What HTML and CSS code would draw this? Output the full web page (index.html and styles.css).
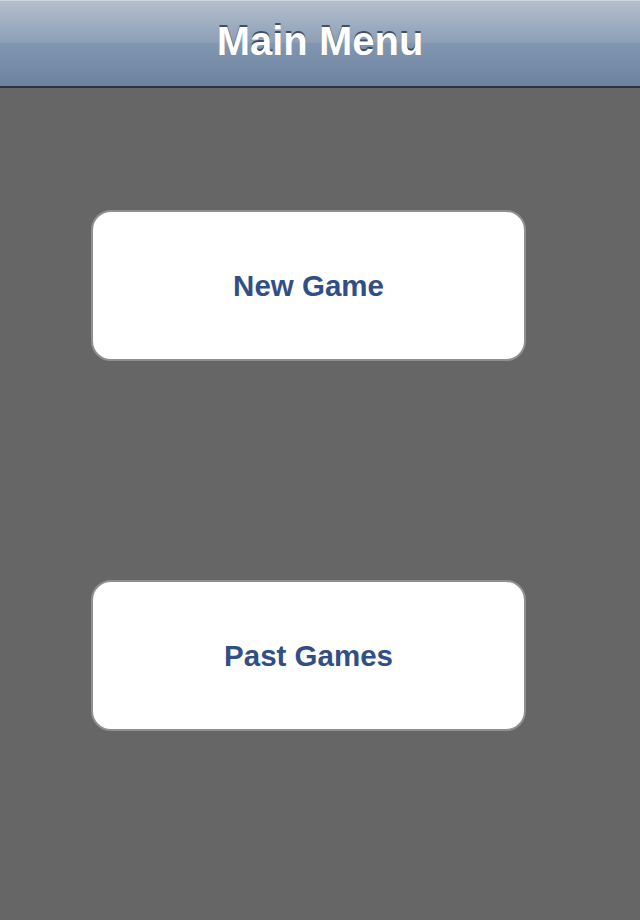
FILE: index.html
```html
<!DOCTYPE html>
<html>
<head>
<meta charset="utf-8">
<link rel="stylesheet" href="styles.css">
</head>
<body>
<header class="navbar"><h1 class="title">Main Menu</h1></header>
<main class="menu">
  <button class="menu-btn">New Game</button>
  <button class="menu-btn">Past Games</button>
</main>
</body>
</html>
```
FILE: styles.css
```css
html, body {
  margin: 0;
  padding: 0;
  background: #666666;
  font-family: "Liberation Sans", Arial, sans-serif;
}
.navbar {
  height: 85px;
  border-top: 1px solid #cfd6de;
  border-bottom: 2px solid #2b333d;
  box-sizing: content-box;
  background: linear-gradient(to bottom, #b3bfcd 0%, #8c9eb5 50%, #8196b0 50%, #6c82a0 100%);
  display: flex;
  align-items: center;
  justify-content: center;
}
.title {
  margin: 0 0 6px 0;
  color: #ffffff;
  font-size: 40px;
  font-weight: bold;
  line-height: 1;
  text-shadow: 0 -2px 0 rgba(40, 50, 65, 0.75);
}
.menu {
  display: flex;
  flex-direction: column;
  align-items: flex-start;
  padding: 122px 0 0 91px;
  gap: 219px;
}
.menu-btn {
  box-sizing: border-box;
  width: 435px;
  height: 151px;
  background: #ffffff;
  border: 2px solid #8f8f8f;
  border-radius: 20px;
  color: #324f85;
  font-family: "Liberation Sans", Arial, sans-serif;
  font-size: 29.5px;
  font-weight: bold;
  display: flex;
  align-items: center;
  justify-content: center;
  padding: 0;
  margin: 0;
}
```
